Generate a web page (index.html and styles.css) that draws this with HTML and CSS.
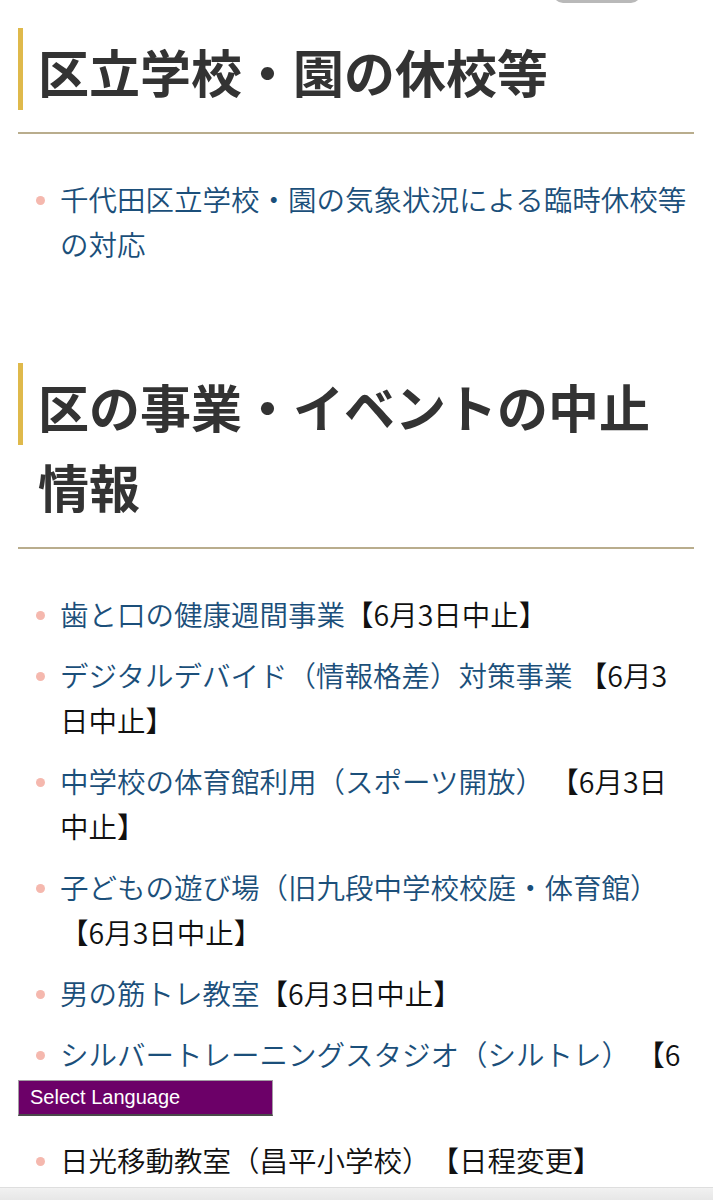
FILE: index.html
```html
<!DOCTYPE html>
<html lang="ja">
<head>
<meta charset="utf-8">
<title>休校・中止情報</title>
<link rel="stylesheet" href="styles.css">
</head>
<body>
<div class="top-tab"></div>
<main class="content">
  <section class="sec sec-first">
    <h2 class="sec-title">区立学校・園の休校等</h2>
    <ul class="list">
      <li><a href="#">千代田区立学校・園の気象状況による臨時休校等の対応</a></li>
    </ul>
  </section>
  <section class="sec sec-second">
    <h2 class="sec-title">区の事業・イベントの中止情報</h2>
    <ul class="list">
      <li><a href="#">歯と口の健康週間事業</a>【6月3日中止】</li>
      <li><a href="#">デジタルデバイド（情報格差）対策事業</a> 【6月3日中止】</li>
      <li><a href="#">中学校の体育館利用（スポーツ開放）</a> 【6月3日中止】</li>
      <li><a href="#">子どもの遊び場（旧九段中学校校庭・体育館）</a>【6月3日中止】</li>
      <li><a href="#">男の筋トレ教室</a>【6月3日中止】</li>
      <li><a href="#">シルバートレーニングスタジオ（シルトレ）</a> 【6月3日中止】</li>
      <li>日光移動教室（昌平小学校）【日程変更】</li>
    </ul>
  </section>
</main>
<div class="lang-select">Select Language</div>
<div class="bottom-bar"></div>
</body>
</html>
```

FILE: styles.css
```css
html, body {
  margin: 0;
  padding: 0;
  background: #ffffff;
}

body {
  font-family: "Noto Sans CJK JP", "Noto Sans", sans-serif;
  color: #111111;
  height: 1200px;
  overflow: hidden;
  position: relative;
  text-spacing-trim: space-all;
}

.top-tab {
  position: absolute;
  left: 553px;
  top: -17px;
  width: 88px;
  height: 20px;
  border-radius: 10px;
  background: #b9b9b9;
}

.content {
  padding: 28px 19px 0 18px;
}

.sec {
  margin: 0;
}

.sec-second {
  margin-top: 97px;
}

.sec-title {
  position: relative;
  margin: 0;
  padding: 3px 0 21px 20px;
  font-size: 51px;
  line-height: 80px;
  font-weight: 700;
  color: #333333;
  border-bottom: 2px solid #b9ad8d;
}

.sec-title::before {
  content: "";
  position: absolute;
  left: 0;
  top: 0;
  width: 5px;
  height: 82px;
  background: #dfb94b;
}

.list {
  list-style: none;
  margin: 42px 0 0 0;
  padding: 0 0 0 42px;
}

.list li {
  position: relative;
  font-size: 28.5px;
  line-height: 45px;
  font-weight: 350;
  color: #111111;
}

.list li + li {
  margin-top: 16px;
}

.list li::before {
  content: "";
  position: absolute;
  left: -24px;
  top: 20px;
  width: 9px;
  height: 9px;
  border-radius: 50%;
  background: #f5b8ae;
}

.list a {
  color: #1b4f7a;
  text-decoration: none;
}

.lang-select {
  position: fixed;
  left: 18px;
  bottom: 84px;
  width: 255px;
  height: 36px;
  box-sizing: border-box;
  background: #6c0068;
  border: 1px solid #a39ca3;
  border-bottom: 2px solid #4a4a4a;
  color: #ffffff;
  font-family: "Liberation Sans", Arial, sans-serif;
  font-size: 20px;
  line-height: 33px;
  padding-left: 11px;
}

.bottom-bar {
  position: fixed;
  left: 0;
  right: 0;
  bottom: 0;
  height: 12px;
  background: linear-gradient(#f1f1f1, #e7e7e7);
  border-top: 1px solid #dedede;
}
```
